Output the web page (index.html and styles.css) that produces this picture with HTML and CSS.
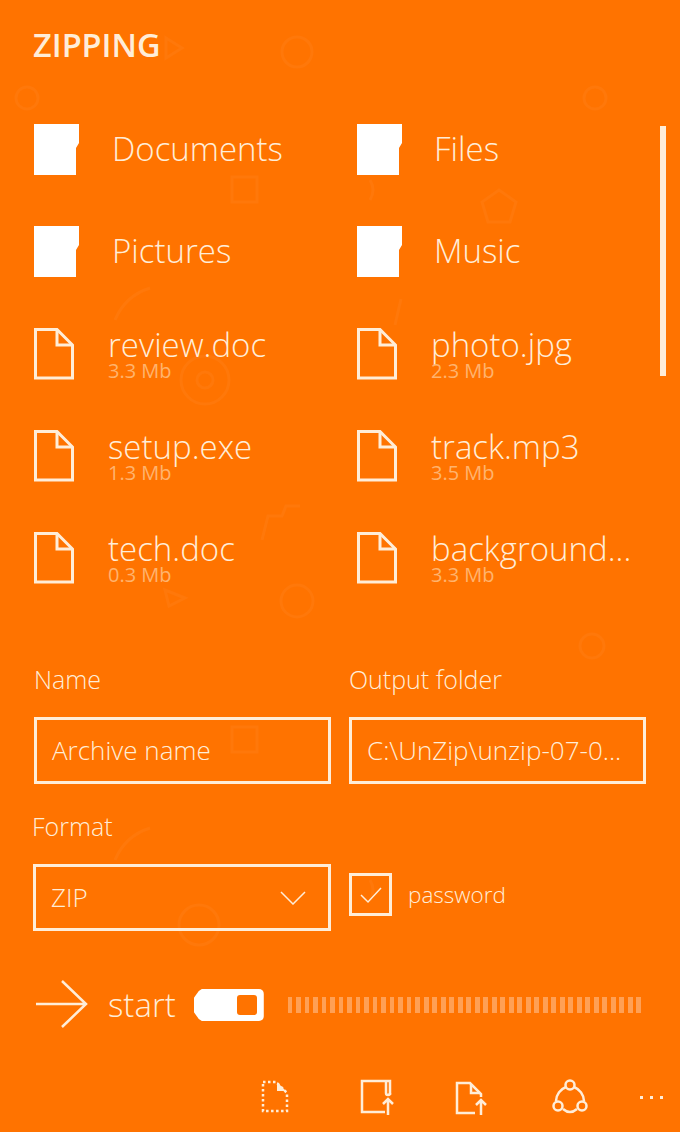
FILE: index.html
```html
<!DOCTYPE html>
<html lang="en">
<head>
    <meta charset="UTF-8">
    <meta name="viewport" content="width=device-width, initial-scale=1.0">
    <title>Zipping</title>
    <link rel="stylesheet" href="styles.css">
</head>
<body>
    <svg class="pattern" width="680" height="1132" viewBox="0 0 680 1132" fill="none" stroke="#fff" stroke-opacity="0.04" stroke-width="3">
        <path d="M166 38l16 10-16 10z"/>
        <circle cx="297" cy="52" r="15"/>
        <circle cx="27" cy="98" r="11"/>
        <circle cx="595" cy="98" r="11"/>
        <rect x="232" y="177" width="25" height="25"/>
        <path d="M499 190l17 12-6 20h-22l-6-20z"/>
        <path d="M370 180q6 10 0 20"/>
        <path d="M115 320q10-24 35-32"/>
        <path d="M395 325l6-26"/>
        <circle cx="205" cy="380" r="24"/>
        <circle cx="205" cy="380" r="8"/>
        <path d="M262 540l6-24h14l4-10h14"/>
        <path d="M165 590l20 8-16 8z"/>
        <circle cx="297" cy="601" r="16"/>
        <circle cx="592" cy="646" r="12"/>
        <rect x="232" y="727" width="25" height="25"/>
        <path d="M115 860q10-24 35-32"/>
        <circle cx="199" cy="925" r="20"/>
        <path d="M370 880q6 10 0 20"/>
    </svg>

    <svg width="0" height="0" class="defs">
        <symbol id="folder" viewBox="0 0 46 52">
            <path fill="#fff" d="M0 0H45V19L42 24V51H0Z"/>
        </symbol>
        <symbol id="file" viewBox="0 0 40 52">
            <path fill="none" stroke="#ffedd8" stroke-width="3" d="M1.500 1.500H23L38.500 17V50H1.500Z"/>
            <path fill="none" stroke="#ffedd8" stroke-width="3" d="M23 1.500V17H38.500"/>
        </symbol>
    </svg>

    <h1 class="title">ZIPPING</h1>

    <div class="scrollbar"></div>

    <div class="items">
        <div class="item folder">
            <svg class="folder-icon"><use href="#folder"/></svg>
            <span class="folder-name">Documents</span>
        </div>
        <div class="item folder">
            <svg class="folder-icon"><use href="#folder"/></svg>
            <span class="folder-name">Files</span>
        </div>
        <div class="item folder">
            <svg class="folder-icon"><use href="#folder"/></svg>
            <span class="folder-name">Pictures</span>
        </div>
        <div class="item folder">
            <svg class="folder-icon"><use href="#folder"/></svg>
            <span class="folder-name">Music</span>
        </div>
        <div class="item">
            <svg class="file-icon"><use href="#file"/></svg>
            <div class="file-text"><div class="file-name">review.doc</div><div class="file-size">3.3 Mb</div></div>
        </div>
        <div class="item">
            <svg class="file-icon"><use href="#file"/></svg>
            <div class="file-text"><div class="file-name">photo.jpg</div><div class="file-size">2.3 Mb</div></div>
        </div>
        <div class="item">
            <svg class="file-icon"><use href="#file"/></svg>
            <div class="file-text"><div class="file-name">setup.exe</div><div class="file-size">1.3 Mb</div></div>
        </div>
        <div class="item">
            <svg class="file-icon"><use href="#file"/></svg>
            <div class="file-text"><div class="file-name">track.mp3</div><div class="file-size">3.5 Mb</div></div>
        </div>
        <div class="item">
            <svg class="file-icon"><use href="#file"/></svg>
            <div class="file-text"><div class="file-name">tech.doc</div><div class="file-size">0.3 Mb</div></div>
        </div>
        <div class="item">
            <svg class="file-icon"><use href="#file"/></svg>
            <div class="file-text"><div class="file-name">background...</div><div class="file-size">3.3 Mb</div></div>
        </div>
    </div>

    <div class="form">
        <div class="field">
            <label class="label">Name</label>
            <div class="box">Archive name</div>
        </div>
        <div class="field">
            <label class="label">Output folder</label>
            <div class="box">C:\UnZip\unzip-07-0...</div>
        </div>
        <div class="field format">
            <label class="label">Format</label>
            <div class="box select">
                ZIP
                <svg class="chevron" width="26" height="14" viewBox="0 0 26 14" fill="none" stroke="#ffedd8" stroke-width="1.500"><path d="M1 1l12 12L25 1"/></svg>
            </div>
        </div>
        <div class="password">
            <div class="checkbox">
                <svg width="24" height="20" viewBox="0 0 24 20" fill="none" stroke="#ffedd8" stroke-width="1.500"><path d="M2 10l7 7L22 3"/></svg>
            </div>
            <span>password</span>
        </div>
    </div>

    <div class="start-row">
        <svg class="arrow" width="54" height="50" viewBox="0 0 54 50" fill="none" stroke="#ffedd8" stroke-width="2.500"><path d="M1 24H50M27 1l24 23-24 23"/></svg>
        <span class="start-text">start</span>
        <div class="toggle"><div class="knob"></div></div>
        <div class="progress"></div>
    </div>

    <div class="appbar">
        <svg class="bar-icon first" width="28" height="36" viewBox="0 0 28 36" fill="none" stroke="#ffedd8" stroke-width="2.500">
            <path stroke-dasharray="2.500 2.500" d="M2 3H15L26 14V32H2Z"/>
            <path fill="#ffedd8" stroke="none" d="M16 3l9 9h-9z"/>
        </svg>
        <svg class="bar-icon second" width="34" height="36" viewBox="0 0 34 36" fill="none" stroke="#ffedd8" stroke-width="2.500">
            <path d="M25 33H2V2H30V16"/>
            <path d="M26 2V14Q26 16 28 16Q30 16 30 14"/>
            <path d="M28 36V20M23 25l5-5 5 5"/>
        </svg>
        <svg class="bar-icon third" width="32" height="36" viewBox="0 0 32 36" fill="none" stroke="#ffedd8" stroke-width="2.500">
            <path d="M20 34H2V4H15L26 15V18"/>
            <path d="M16 5V14H25"/>
            <path d="M26 36V21M21 26l5-5 5 5"/>
        </svg>
        <svg class="bar-icon fourth" width="36" height="36" viewBox="0 0 36 36" fill="none" stroke="#ffedd8" stroke-width="2.500">
            <path d="M14 8A16 16 0 0 0 4 22M11 30Q18 36 25 30M22 8A16 16 0 0 1 32 22"/>
            <circle cx="18" cy="6" r="4.500"/>
            <circle cx="6" cy="27" r="4.500"/>
            <circle cx="30" cy="27" r="4.500"/>
        </svg>
        <div class="more"><i></i><i></i><i></i></div>
    </div>
</body>
</html>
```

FILE: styles.css
```css
* {
    box-sizing: border-box;
}
body {
    margin: 0;
    width: 680px;
    height: 1132px;
    position: relative;
    overflow: hidden;
    background-color: #ff7300;
    color: #ffedd8;
    font-family: "Open Sans", "Liberation Sans", sans-serif;
}
.pattern {
    position: absolute;
    left: 0;
    top: 0;
}
.defs {
    position: absolute;
}
.title {
    position: relative;
    margin: 0;
    padding: 26px 0 0 33px;
    height: 124px;
    font-size: 32.500px;
    line-height: 38px;
    font-weight: 600;
    letter-spacing: 0;
}
.scrollbar {
    position: absolute;
    left: 660px;
    top: 126px;
    width: 6px;
    height: 250px;
    background-color: #ffedd8;
}

.items {
    position: relative;
    display: grid;
    grid-template-columns: 323px 300px;
    grid-auto-rows: 102px;
    padding-left: 34px;
    height: 540px;
}
.item {
    display: flex;
    align-items: flex-start;
}
.folder-icon {
    width: 46px;
    height: 52px;
    flex-shrink: 0;
}
.folder-name {
    margin-left: 32px;
    font-size: 33px;
    line-height: 50px;
    font-weight: 300;
}
.item:nth-child(even) .folder-name {
    margin-left: 31px;
}
.file-icon {
    width: 40px;
    height: 52px;
    flex-shrink: 0;
}
.file-text {
    margin-left: 34px;
}
.file-name {
    font-size: 33px;
    line-height: 34px;
    font-weight: 300;
    white-space: nowrap;
}
.file-size {
    font-size: 20px;
    line-height: 18px;
    color: #ffb36e;
}

.form {
    position: relative;
    display: grid;
    grid-template-columns: 315px 297px;
    column-gap: 0;
    padding-left: 34px;
}
.label {
    display: block;
    font-size: 25px;
    line-height: 30px;
    font-weight: 300;
    margin-bottom: 23px;
}
.field {
    height: 147px;
}
.box {
    width: 297px;
    height: 67px;
    border: 3px solid #ffedd8;
    padding-left: 15px;
    font-size: 26px;
    line-height: 61px;
    font-weight: 300;
    white-space: nowrap;
}
.format .label {
    margin-left: -2px;
}
.format .box {
    margin-left: -1px;
    width: 298px;
}
.select {
    display: flex;
    align-items: center;
    justify-content: space-between;
    padding-right: 22px;
}
.password {
    display: flex;
    align-items: center;
    gap: 16px;
    height: 43px;
    margin-top: 62px;
    font-size: 22.500px;
    font-weight: 300;
}
.checkbox {
    width: 43px;
    height: 43px;
    border: 3px solid #ffedd8;
    display: flex;
    align-items: center;
    justify-content: center;
}

.start-row {
    position: relative;
    display: flex;
    align-items: center;
    height: 50px;
    margin-top: 22px;
    padding-left: 35px;
}
.arrow {
    flex-shrink: 0;
}
.start-text {
    margin-left: 19px;
    font-size: 33px;
    line-height: 48px;
    font-weight: 300;
}
.toggle {
    position: relative;
    margin-left: 18px;
    width: 70px;
    height: 32px;
    background-color: #fff;
    border-radius: 5px;
    flex-shrink: 0;
    clip-path: polygon(0 9px, 5px 2px, 8px 0, 100% 0, 100% 100%, 8px 100%, 5px 30px, 0 23px);
}
.knob {
    position: absolute;
    right: 7px;
    top: 6px;
    width: 20px;
    height: 20px;
    border-radius: 3px;
    background-color: #ff7300;
}
.progress {
    margin-left: 24px;
    width: 355px;
    height: 16px;
    background-image: repeating-linear-gradient(90deg, #ffa055 0 4.500px, transparent 4.500px 8.500px);
}

.appbar {
    position: absolute;
    left: 0;
    right: 0;
    top: 1079px;
    height: 36px;
    display: flex;
    align-items: center;
}
.bar-icon {
    flex-shrink: 0;
}
.first {
    margin-left: 261px;
}
.second {
    margin-left: 71px;
}
.third {
    margin-left: 61px;
}
.fourth {
    margin-left: 65px;
}
.more {
    display: flex;
    gap: 7px;
    margin-left: 52px;
}
.more i {
    width: 3px;
    height: 3px;
    background-color: #ffedd8;
}
```
